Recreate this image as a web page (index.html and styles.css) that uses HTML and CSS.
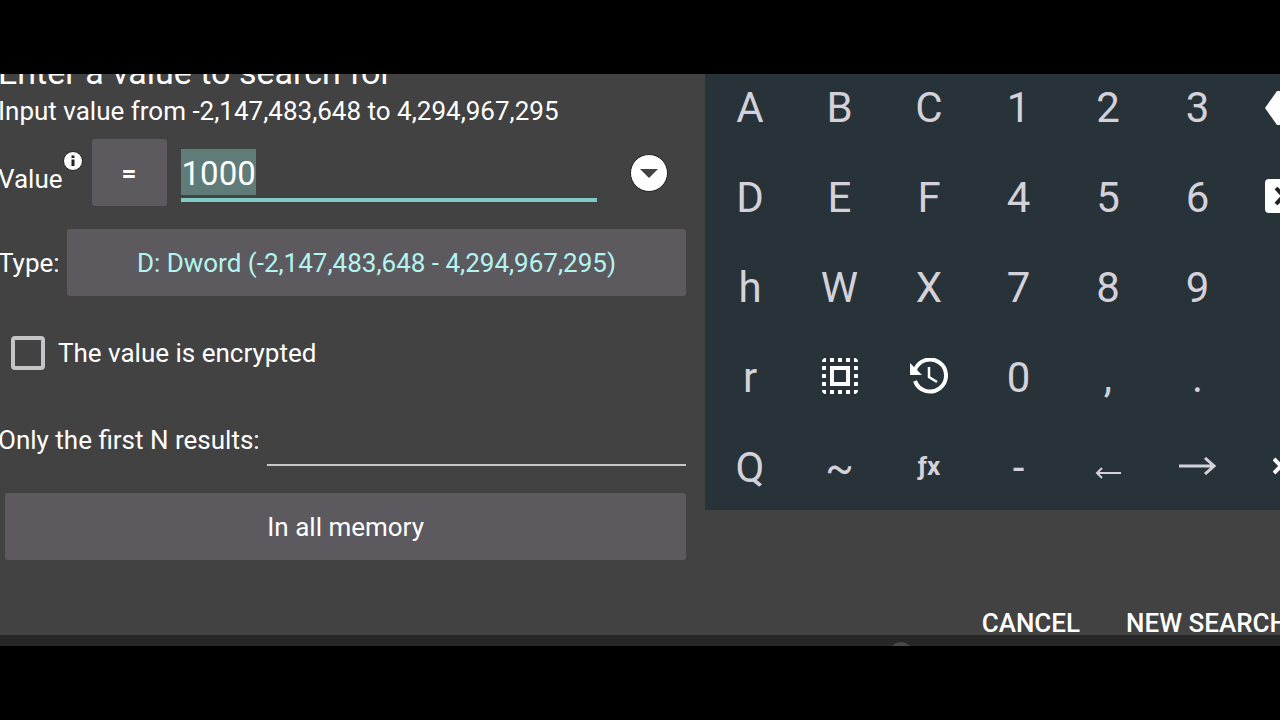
FILE: index.html
```html
<!DOCTYPE html>
<html lang="en">
<head>
<meta charset="utf-8">
<title>Enter a value to search for</title>
<link rel="stylesheet" href="styles.css">
</head>
<body>
<main class="screen">
  <div class="dialog">
    <form class="form">
      <h1 class="title">Enter a value to search for</h1>
      <p class="hint">Input value from -2,147,483,648 to 4,294,967,295</p>
      <div class="row value-row">
        <label class="label value-label" for="value">Value</label>
        <button type="button" class="icon-button info" aria-label="Info">
          <svg width="20" height="20" viewBox="0 0 20 20"><circle cx="10" cy="10" r="9.5" fill="#fff" stroke="#222"/><path d="M8.500 8.500h3V15h-3zM8.500 4.500h3v2.500h-3z" fill="#222"/></svg>
        </button>
        <button type="button" class="button compare">=</button>
        <input id="value" class="value-input" type="text" value="1000">
        <button type="button" class="icon-button history" aria-label="Previous values">
          <svg width="38" height="38" viewBox="0 0 38 38"><circle cx="19" cy="19" r="18.500" fill="#fff" stroke="#222"/><path d="M10 15h18l-9 9z" fill="#424242"/></svg>
        </button>
      </div>
      <div class="row type-row">
        <span class="label">Type:</span>
        <button type="button" class="button type">D: Dword (-2,147,483,648 - 4,294,967,295)</button>
      </div>
      <div class="row check-row">
        <input id="encrypted" class="checkbox" type="checkbox">
        <label for="encrypted">The value is encrypted</label>
      </div>
      <div class="row limit-row">
        <label class="label limit-label" for="limit">Only the first N results:</label>
        <input id="limit" class="limit-input" type="text">
      </div>
      <button type="button" class="button memory">In all memory</button>
    </form>
    <div class="side">
      <div class="keypad">
        <button type="button" class="key">A</button>
        <button type="button" class="key">B</button>
        <button type="button" class="key">C</button>
        <button type="button" class="key">1</button>
        <button type="button" class="key">2</button>
        <button type="button" class="key">3</button>
        <button type="button" class="key" aria-label="Backspace"><svg width="44" height="36" viewBox="0 0 44 36"><path d="M12 1h29q2 0 2 2v30q0 2-2 2H12L0 18z" fill="#fff"/><path d="M20 11l14 14M34 11L20 25" stroke="#222" stroke-width="4"/></svg></button>
        <button type="button" class="key">D</button>
        <button type="button" class="key">E</button>
        <button type="button" class="key">F</button>
        <button type="button" class="key">4</button>
        <button type="button" class="key">5</button>
        <button type="button" class="key">6</button>
        <button type="button" class="key" aria-label="Clear"><svg class="raised" width="44" height="36" viewBox="0 0 44 36"><rect y="1" width="44" height="34" rx="4" fill="#fff"/><path d="M11 10l15 16M11 26l15-16" stroke="#222" stroke-width="4"/></svg></button>
        <button type="button" class="key">h</button>
        <button type="button" class="key">W</button>
        <button type="button" class="key">X</button>
        <button type="button" class="key">7</button>
        <button type="button" class="key">8</button>
        <button type="button" class="key">9</button>
        <span class="key"></span>
        <button type="button" class="key">r</button>
        <button type="button" class="key" aria-label="Select all"><svg class="raised" width="36" height="36" viewBox="0 0 36 36"><path d="M10 10h16v16H10z" fill="none" stroke="#fff" stroke-width="4"/><g fill="none" stroke="#fff" stroke-width="4"><path d="M8 2h22M8 34h22" stroke-dasharray="4 4"/><path d="M2 8v22M34 8v22" stroke-dasharray="4 4"/></g><path d="M0 4q0-4 4-4v4zM32 0q4 0 4 4h-4zM0 32h4v4q-4 0-4-4zM32 32h4q0 4-4 4z" fill="#fff"/></svg></button>
        <button type="button" class="key" aria-label="History"><svg class="raised" width="38" height="36" viewBox="0 0 38 36"><path d="M5 12A16 16 0 1 1 5 23" fill="none" stroke="#fff" stroke-width="4"/><path d="M0 5v12h12z" fill="#fff"/><path d="M19 9v10l8 5" fill="none" stroke="#fff" stroke-width="2.500"/></svg></button>
        <button type="button" class="key">0</button>
        <button type="button" class="key">,</button>
        <button type="button" class="key">.</button>
        <span class="key"></span>
        <button type="button" class="key">Q</button>
        <button type="button" class="key">~</button>
        <button type="button" class="key function">ƒx</button>
        <button type="button" class="key">-</button>
        <button type="button" class="key" aria-label="Left"><svg class="lowered" width="26" height="12" viewBox="0 0 26 12"><path d="M26 6H2M7 1L2 6l5 5" fill="none" stroke="#d4d1da" stroke-width="2"/></svg></button>
        <button type="button" class="key" aria-label="Right"><svg class="raised" width="38" height="18" viewBox="0 0 38 18"><path d="M1 9h35M27 1l9 8-9 8" fill="none" stroke="#d4d1da" stroke-width="3"/></svg></button>
        <button type="button" class="key" aria-label="Close"><svg class="raised" width="28" height="18" viewBox="0 0 28 18"><path d="M1 2l7 7-7 7M27 2l-7 7 7 7" fill="none" stroke="#fff" stroke-width="4"/></svg></button>
      </div>
      <div class="actions">
        <button type="button" class="action">CANCEL</button>
        <button type="button" class="action">NEW SEARCH</button>
      </div>
    </div>
  </div>
  <div class="backdrop"><span class="knob"></span></div>
</main>
</body>
</html>
```
FILE: styles.css
```css
* {
  box-sizing: border-box;
}

body {
  margin: 0;
  background: #000;
  color: #fff;
  font: 26px/30px Roboto, sans-serif;
}

button,
input {
  margin: 0;
  padding: 0;
  border: 0;
  border-radius: 0;
  background: none;
  color: inherit;
  font: inherit;
  outline: 0;
}

svg {
  display: block;
}

.screen {
  display: flex;
  flex-direction: column;
  height: 100vh;
  padding: 74px 0;
  overflow: hidden;
}

.dialog {
  flex: 1;
  min-height: 0;
  display: grid;
  grid-template-columns: 55.1% 1fr;
  background: #424242;
  overflow: hidden;
}

.form {
  display: flex;
  flex-direction: column;
  min-width: 0;
  margin: -22px 19px 0 -2px;
}

.title {
  margin: 0 0 4px;
  font-size: 34px;
  line-height: 40px;
  font-weight: 400;
}

.hint {
  margin: 0 0 13px;
}

.row {
  display: flex;
  align-items: center;
}

.value-row {
  height: 67px;
  margin-bottom: 23px;
}

.value-label {
  padding-top: 12px;
}

.info {
  align-self: flex-start;
  margin: 12px 9px 0 0;
}

.button {
  height: 67px;
  border-radius: 3px;
  background: #5d5a5f;
}

.compare {
  width: 75px;
  margin-right: 14px;
  font-weight: 700;
}

.value-input {
  flex: 1;
  min-width: 0;
  align-self: flex-end;
  height: 53px;
  margin-bottom: 4px;
  padding: 2px 1px 3px;
  border-bottom: 4px solid #80cbc4;
  background: linear-gradient(#5f7c78, #5f7c78) no-repeat 0 0 / 75px 46px;
  font-size: 33px;
}

.history {
  margin: 0 18px 0 33px;
}

.type-row {
  gap: 7px;
  margin-bottom: 36px;
}

.type {
  flex: 1;
  color: #b2f5f0;
}

.check-row {
  gap: 13px;
  height: 41px;
  margin: 0 0 35px 13px;
}

.checkbox {
  appearance: none;
  width: 34px;
  height: 34px;
  border: 4px solid #c4c3c5;
  border-radius: 4px;
}

.limit-row {
  gap: 7px;
  height: 58px;
  margin-bottom: 27px;
}

.limit-label {
  padding-top: 6px;
}

.limit-input {
  flex: 1;
  min-width: 0;
  height: 100%;
  border-bottom: 2px solid #c8c8c8;
}

.memory {
  margin-left: 7px;
}

.side {
  display: flex;
  flex-direction: column;
  min-width: 0;
}

.keypad {
  display: grid;
  grid-template-columns: repeat(7, 1fr);
  grid-auto-rows: 88px;
  row-gap: 2px;
  width: 109%;
  margin-top: -12px;
  background: #283339;
}

.key {
  display: flex;
  align-items: center;
  justify-content: center;
  padding-top: 4px;
  color: #d4d1da;
  font-size: 42px;
  line-height: 48px;
}

.function {
  padding-top: 0;
  font-size: 26px;
  font-weight: 700;
}

.raised {
  margin-bottom: 4px;
}

.lowered {
  margin-top: 10px;
}

.actions {
  display: flex;
  justify-content: flex-end;
  gap: 46px;
  margin: auto -8px -5px 0;
  font-weight: 500;
}

.action {
  height: 34px;
  white-space: nowrap;
}

.backdrop {
  display: flex;
  justify-content: center;
  height: 11px;
  padding-left: 522px;
  background: #272727;
  overflow: hidden;
}

.knob {
  width: 24px;
  height: 24px;
  margin-top: 7px;
  border-radius: 50%;
  background: #484848;
}
```
